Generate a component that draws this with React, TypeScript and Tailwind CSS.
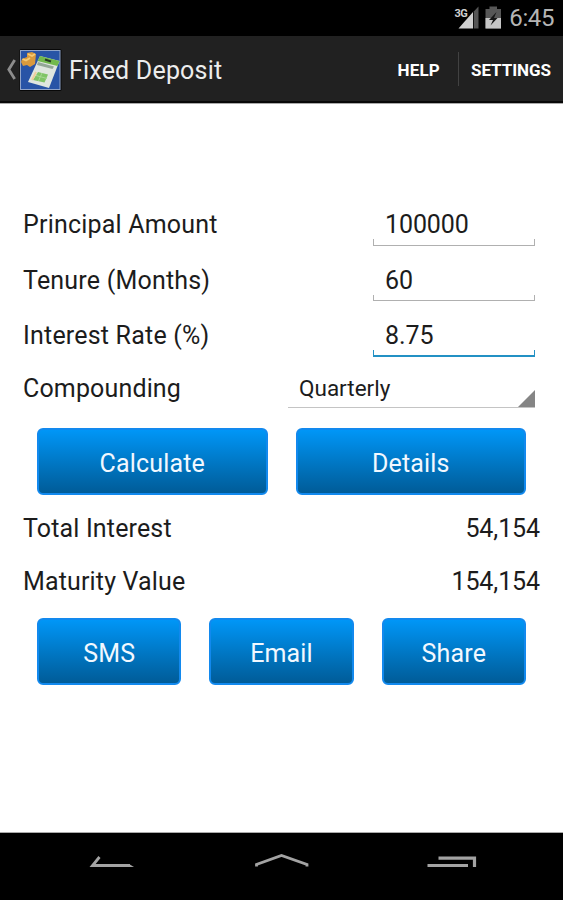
import React from "react";

function Field({ label, value, active }: { label: string; value: string; active?: boolean }) {
  return (
    <div className="flex h-[55.6px] items-start justify-between pr-[28px] pl-[23px]">
      <span className="h-[54px] text-[25px] leading-[56px] tracking-[0.2px]">{label}</span>
      <div className="flex w-[162px] flex-col">
        <span className="h-[42px] pl-[12px] text-[25px] leading-[56px] tracking-[-0.1px]">{value}</span>
        <div
          className={
            active
              ? "h-[7px] border-x border-b-2 border-[#2391c4]"
              : "h-[6.5px] border-x border-b-[1.5px] border-[#b0b0b0]"
          }
        />
      </div>
    </div>
  );
}

function BlueButton({ children }: { children: React.ReactNode }) {
  return (
    <button className="h-[67px] flex-1 rounded-[6px] border-2 border-[#1289ee] bg-linear-to-b from-[#0098fa] to-[#005a95] bg-origin-border pt-[5px] text-[25px] tracking-[0.15px] text-[#f2f8ff]">
      {children}
    </button>
  );
}

function Result({ label, value }: { label: string; value: string }) {
  return (
    <div className="flex h-[53.5px] items-center justify-between pr-[23px] pl-[23px] text-[25px]">
      <span className="tracking-[0.15px]">{label}</span>
      <span className="tracking-[-0.1px]">{value}</span>
    </div>
  );
}

export default function App() {
  return (
    <div className="flex h-[900px] w-[563px] flex-col overflow-hidden bg-white font-['Roboto',sans-serif] whitespace-nowrap text-[#1c1c1c]">
      <div className="flex h-[36px] items-center justify-end bg-black pr-[9px]">
        <svg width="50" height="36" viewBox="454 0 50 36">
          <path d="M475 12V28.500H460.500Z" fill="#d0d0d0" />
          <path d="M475.800 11.500L480.500 6.500V28.500H475.800Z" fill="#555" />
          <text x="456.500" y="16.500" fontSize="11" fontWeight="700" fill="#d0d0d0" stroke="#000" strokeWidth="1.500" paintOrder="stroke" letterSpacing="-0.500">3G</text>
          <path d="M491.500 6.500H499V9H503V28.500H487.500V9H491.500Z" fill="#575757" />
          <path d="M487.500 18H503V28.500H487.500Z" fill="#c6c6c6" />
          <path d="M498.500 12L491 20H495L492.500 25.500L499.500 18H496Z" fill="#161616" />
        </svg>
        <span className="ml-[7px] text-[24px] leading-[38px] tracking-[-0.4px] text-[#b5b5b5]">6:45</span>
      </div>
      <header className="flex h-[67px] items-center border-b-2 border-[#080808] bg-[#212121]">
        <svg className="ml-[5px] shrink-0" width="58" height="46" viewBox="5 46 58 46">
          <path d="M14.700 60L8.800 69.500L14.700 79" fill="none" stroke="#8c8c8c" strokeWidth="2.800" />
          <rect x="19.500" y="49" width="42" height="42" rx="1.500" fill="#080808" />
          <rect x="20.500" y="50.500" width="39.500" height="39" fill="#2854a6" stroke="#91a5c9" />
          <path d="M22 59L27 57V53L32 52L36 54L35 64L30 67L27 65L23 66L21 62Z" fill="#d99a3c" />
          <path d="M22.500 59L26 60.500L30 58M28 54L32 56L35 54" fill="none" stroke="#f5ca73" strokeWidth="1.800" />
          <path d="M40 56L59.500 61L49 88L28 82Z" fill="#dfe6df" />
          <path d="M40 56L59.500 61L57.500 66L37.500 61Z" fill="#72b94c" />
          <path d="M38 62L54 66.500L52.500 69L37 65Z" fill="#93a797" />
          <path d="M45 59.500L51 61.500" stroke="#273c23" strokeWidth="2" />
          <path d="M38 72L48 74.500L44.500 82.500L33 80Z" fill="#7fc466" />
          <path d="M36 75.500L47 78.500M42 73L38.500 81" stroke="#a7d894" strokeWidth="1" />
          <path d="M36 72L32 80" stroke="#efcf9b" strokeWidth="2" />
        </svg>
        <span className="mt-[5px] ml-[6px] text-[25px] tracking-[0.2px] text-[#ededed]">Fixed Deposit</span>
        <span className="mt-[5px] ml-auto text-[17px] font-bold tracking-[0.2px] text-white">HELP</span>
        <div className="mr-[12px] ml-[18px] h-[34px] w-px bg-[#424242]" />
        <span className="mt-[5px] mr-[12px] text-[17px] font-bold tracking-[-0.05px] text-white">SETTINGS</span>
      </header>
      <main className="flex flex-1 flex-col border-t border-[#aaa] pt-[93px]">
        <Field label="Principal Amount" value="100000" />
        <Field label="Tenure (Months)" value="60" />
        <Field label="Interest Rate (%)" value="8.75" active />
        <div className="flex h-[64.2px] items-start justify-between pr-[28px] pl-[23px]">
          <span className="text-[25px] leading-[49px] tracking-[0.15px]">Compounding</span>
          <div className="flex h-[44px] w-[247px] justify-between border-b border-[#c4c4c4] pl-[11px]">
            <span className="text-[22.5px] leading-[49px]">Quarterly</span>
            <svg className="self-end" width="17" height="17" viewBox="0 0 17 17">
              <path d="M17 0V17H0Z" fill="#858585" />
            </svg>
          </div>
        </div>
        <div className="flex gap-[28px] px-[37px]">
          <BlueButton>Calculate</BlueButton>
          <BlueButton>Details</BlueButton>
        </div>
        <div className="pt-[7px] pb-[9px]">
          <Result label="Total Interest" value="54,154" />
          <Result label="Maturity Value" value="154,154" />
        </div>
        <div className="flex gap-[28px] px-[37px]">
          <BlueButton>SMS</BlueButton>
          <BlueButton>Email</BlueButton>
          <BlueButton>Share</BlueButton>
        </div>
      </main>
      <nav className="h-[68px] border-t border-[#aaa] bg-black">
        <svg width="563" height="67" viewBox="0 833 563 67" fill="none" stroke="#a3a3a3">
          <path d="M99.500 857L92.500 865.500H130" strokeWidth="2.800" />
          <path d="M129 864.100L134 866.900H129Z" fill="#a3a3a3" stroke="none" />
          <path d="M256.500 866.500V864.500L281.500 855.500L307 864.500V866.500" strokeWidth="2.800" />
          <path d="M438.500 858.200H474.500V867M427.500 865.500H468" strokeWidth="3.200" />
        </svg>
      </nav>
    </div>
  );
}
